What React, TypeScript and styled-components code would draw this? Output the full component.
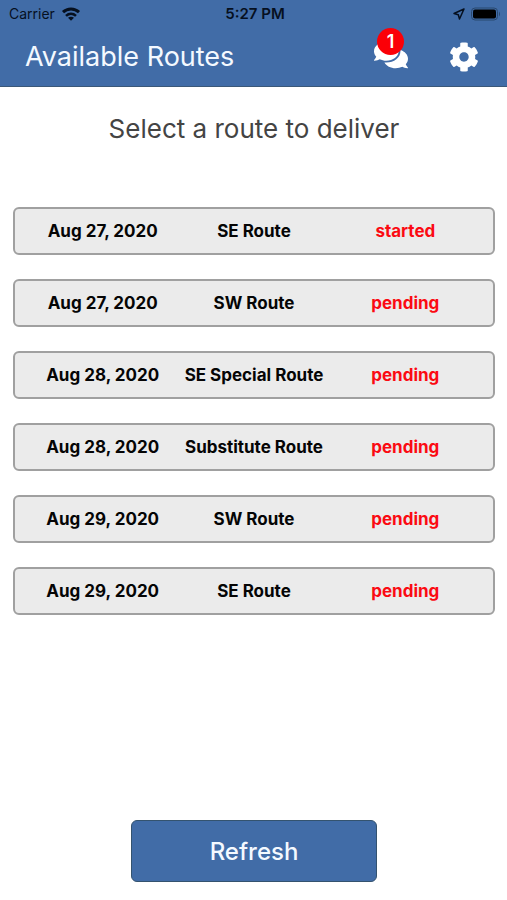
import React from "react";
import styled, { createGlobalStyle } from "styled-components";
import { FaCog, FaComments } from "react-icons/fa";

const GlobalStyle = createGlobalStyle`
  * { box-sizing: border-box; }
  body {
    margin: 0;
    background: #fff;
    font-family: Inter, "Liberation Sans", sans-serif;
  }
  button { font-family: inherit; cursor: pointer; }
`;

const Screen = styled.div`
  min-height: 100vh;
  display: flex;
  flex-direction: column;
`;

const Header = styled.header`
  background: #416ca7;
  border-bottom: 1px solid #3b5878;
`;

const StatusBar = styled.div`
  height: 27px;
  padding: 0 6px 0 9px;
  display: grid;
  grid-template-columns: 1fr auto 1fr;
  align-items: center;
  font-size: 14px;
  line-height: 20px;
  color: #06101f;
`;

const StatusGroup = styled.div<{ $end?: boolean }>`
  display: flex;
  align-items: center;
  gap: 6px;
  justify-content: ${(p) => (p.$end ? "flex-end" : "flex-start")};
`;

const Clock = styled.time`
  font-size: 15px;
  font-weight: 600;
`;

const TitleBar = styled.div`
  height: 59px;
  padding: 0 28px 0 25px;
  display: flex;
  align-items: center;
`;

const Title = styled.h1`
  flex: 1;
  margin: 0;
  font-size: 27px;
  line-height: 32px;
  font-weight: 400;
  color: #f4f9ff;
`;

const Actions = styled.div`
  display: flex;
  align-items: center;
  gap: 41px;
`;

const IconButton = styled.button`
  position: relative;
  display: flex;
  padding: 0;
  border: 0;
  background: none;
  color: #fff;
`;

const MessagesButton = styled(IconButton)`
  padding-bottom: 4px;
`;

const Badge = styled.span`
  position: absolute;
  left: 3px;
  bottom: 21px;
  width: 27px;
  height: 27px;
  border-radius: 50%;
  background: #fb0007;
  font-size: 18px;
  line-height: 27px;
  font-weight: 600;
  text-align: center;
`;

const Main = styled.main`
  flex: 1;
  display: flex;
  flex-direction: column;
  padding: 24px 12px 18px 13px;
`;

const Prompt = styled.h2`
  margin: 0 0 60px;
  font-size: 26px;
  line-height: 36px;
  font-weight: 400;
  text-align: center;
  color: #444;
`;

const RouteList = styled.ul`
  margin: 0;
  padding: 0;
  list-style: none;
  display: flex;
  flex-direction: column;
  gap: 24px;
`;

const RouteButton = styled.button`
  width: 100%;
  height: 48px;
  padding: 0 12px;
  display: grid;
  grid-template-columns: repeat(3, 1fr);
  align-items: center;
  border: 2px solid #a0a0a0;
  border-radius: 6px;
  background: #ebebeb;
  color: #050505;
  font-size: 17px;
  line-height: 24px;
  font-weight: 700;
  text-align: center;
  white-space: nowrap;
`;

const Status = styled.span`
  color: #fb0a12;
`;

const RefreshButton = styled.button`
  width: 51%;
  height: 62px;
  margin: auto auto 0;
  border: 1px solid #34536f;
  border-radius: 6px;
  background: #416ca7;
  color: #f4f9ff;
  font-size: 24px;
  font-weight: 500;
`;

const routes = [
  { date: "Aug 27, 2020", name: "SE Route", status: "started" },
  { date: "Aug 27, 2020", name: "SW Route", status: "pending" },
  { date: "Aug 28, 2020", name: "SE Special Route", status: "pending" },
  { date: "Aug 28, 2020", name: "Substitute Route", status: "pending" },
  { date: "Aug 29, 2020", name: "SW Route", status: "pending" },
  { date: "Aug 29, 2020", name: "SE Route", status: "pending" },
];

const WifiIcon = () => (
  <svg width="20" height="14" viewBox="0 0 20 14" fill="none" stroke="currentColor" strokeWidth="3" aria-hidden="true">
    <path d="M2 5.200C6.500.9 13.500.9 18 5.200" />
    <path d="M5 8.900C8 6.200 12 6.200 15 8.900" strokeWidth="2.600" />
    <path d="M7 10.800C8.800 9.300 11.200 9.300 13 10.800L10 13.800Z" fill="currentColor" stroke="none" />
  </svg>
);

const LocationIcon = () => (
  <svg width="12" height="12" viewBox="0 0 12 12" fill="none" stroke="currentColor" strokeWidth="1.500" strokeLinejoin="round" aria-hidden="true">
    <path d="M11 1 1 5.500 5.300 6.700 6.500 11Z" />
  </svg>
);

const BatteryIcon = () => (
  <svg width="30" height="14" viewBox="0 0 30 14" aria-hidden="true">
    <rect x="0.500" y="1" width="26" height="12" rx="3.500" fill="none" stroke="#29486f" />
    <rect x="2" y="2.500" width="23" height="9" rx="2" fill="#000" />
    <path d="M28 4.500q2 2.500 0 5Z" fill="#29486f" />
  </svg>
);

export default function App() {
  return (
    <Screen>
      <GlobalStyle />
      <Header>
        <StatusBar>
          <StatusGroup>
            <span>Carrier</span>
            <WifiIcon />
          </StatusGroup>
          <Clock>5:27 PM</Clock>
          <StatusGroup $end>
            <LocationIcon />
            <BatteryIcon />
          </StatusGroup>
        </StatusBar>
        <TitleBar>
          <Title>Available Routes</Title>
          <Actions>
            <MessagesButton type="button" aria-label="Messages, 1 unread">
              <FaComments size={34} />
              <Badge>1</Badge>
            </MessagesButton>
            <IconButton type="button" aria-label="Settings">
              <FaCog size={30} />
            </IconButton>
          </Actions>
        </TitleBar>
      </Header>
      <Main>
        <Prompt>Select a route to deliver</Prompt>
        <RouteList>
          {routes.map((route) => (
            <li key={route.date + route.name}>
              <RouteButton type="button">
                <span>{route.date}</span>
                <span>{route.name}</span>
                <Status>{route.status}</Status>
              </RouteButton>
            </li>
          ))}
        </RouteList>
        <RefreshButton type="button">Refresh</RefreshButton>
      </Main>
    </Screen>
  );
}
